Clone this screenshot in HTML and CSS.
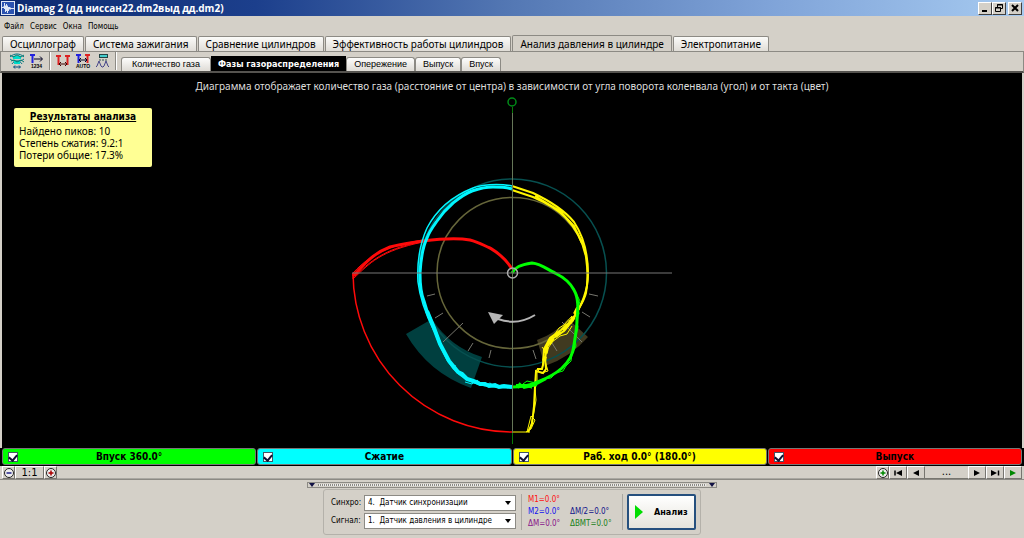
FILE: index.html
```html
<!DOCTYPE html>
<html lang="ru">
<head>
<meta charset="utf-8">
<title>Diamag 2</title>
<link rel="stylesheet" href="styles.css">
</head>
<body>
<div class="window">
  <header class="titlebar">
    <svg class="app-icon" viewBox="0 0 14 14" aria-hidden="true"><rect width="14" height="14" fill="#dfe6f4"/><rect x="1" y="1" width="12" height="12" fill="#2a52b0"/><path d="M1 6h1l1-1V2h1v2l1 1V3h1v2l1-1v2h2l1 1h3v1h-3l-1 1-1-1v2H7v2H6v-2H5v1H4V8H3V7H1z" fill="#dfe6f4"/></svg>
    <h1 class="title">Diamag 2 (дд ниссан22.dm2выд дд.dm2)</h1>
    <div class="window-buttons">
      <button class="win-btn" aria-label="Свернуть"><svg viewBox="0 0 12 10"><path d="M3 8h5" stroke="#000" stroke-width="2"/></svg></button>
      <button class="win-btn" aria-label="Восстановить"><svg viewBox="0 0 12 10"><path d="M4.500 4V1.500h5v4H8M4 2h6M2.500 4.500h5v4h-5zM2 5h6" fill="none" stroke="#000"/></svg></button>
      <button class="win-btn win-close" aria-label="Закрыть"><svg viewBox="0 0 12 10"><path d="M3 2l6 6M9 2L3 8" stroke="#000" stroke-width="2"/></svg></button>
    </div>
  </header>

  <nav class="menubar">
    <button>Файл</button><button>Сервис</button><button>Окна</button><button>Помощь</button>
  </nav>

  <div class="main-tabs" role="tablist">
    <button role="tab">Осциллограф</button>
    <button role="tab">Система зажигания</button>
    <button role="tab">Сравнение цилиндров</button>
    <button role="tab">Эффективность работы цилиндров</button>
    <button role="tab" class="active" aria-selected="true">Анализ давления в цилиндре</button>
    <button role="tab">Электропитание</button>
  </div>

  <div class="toolbar">
    <div class="tools">
      <button class="tool" aria-label="Наложение"><svg viewBox="0 0 16 16"><path d="M1 4c4-4 10-4 14 0M1 6c4 3 10 3 14 0M3 11c2-4 8-4 10 0" fill="none" stroke="#078" stroke-width="1"/><path d="M4 3h8v3H4zM5 8h6v3H5z" fill="#0dc"/><path d="M1 2l3 2 4-2 4 2 3-2M2 8l3-1 3 2 4-2 3 2" fill="none" stroke="#087a70"/><path d="M5 14h6M6 12.500L4.500 14 6 15.500M10 12.500L11.500 14 10 15.500" fill="none" stroke="#047"/></svg></button>
      <button class="tool" aria-label="Номера цилиндров"><svg viewBox="0 0 16 16"><path d="M1 1h5v2H4.500v7h-2V3H1z" fill="#22d"/><path d="M5 6h8M11 3.500L13.500 6 11 8.500" fill="none" stroke="#002"/><text x="2" y="15" class="icon-label">1234</text></svg></button>
      <span class="separator"></span>
      <button class="tool" aria-label="Метки"><svg viewBox="0 0 16 16"><path d="M1 2h5v2H4.500v8h-2V4H1zM10 2h5v2h-1.500v8h-2V4H10z" fill="#d22"/><path d="M4 11h8M6 9l-2 2 2 2M10 9l2 2-2 2" fill="none" stroke="#400"/></svg></button>
      <button class="tool" aria-label="Авто метки"><svg viewBox="0 0 16 16"><path d="M1 1h5v2H4.500v7h-2V3H1z" fill="#22d"/><path d="M10 1h5v2h-1.500v7h-2V3H10z" fill="#d22"/><path d="M4 7h8M6 5L4 7l2 2M10 5l2 2-2 2" fill="none" stroke="#002"/><text x="1" y="15" class="icon-label">AUTO</text></svg></button>
      <button class="tool" aria-label="Пики"><svg viewBox="0 0 16 16"><rect x="4.500" y="1.500" width="8" height="3" fill="#4cc" stroke="#244"/><path d="M5 6v2M8 6v2M11 6v2" stroke="#355"/><path d="M1 14l1-1 2-5 2 5 1 1h1l1-1 2-5 2 5 1 1" fill="none" stroke="#448"/></svg></button>
      <span class="separator"></span>
    </div>
    <div class="sub-tabs" role="tablist">
      <button role="tab" class="wide">Количество газа</button>
      <button role="tab" class="active" aria-selected="true">Фазы газораспределения</button>
      <button role="tab">Опережение</button>
      <button role="tab">Выпуск</button>
      <button role="tab">Впуск</button>
    </div>
  </div>

  <main class="plot">
    <svg class="diagram" viewBox="2 73 1020 375" role="img" aria-label="Фазы газораспределения">
      <g fill="none">
        <path d="M406 334A122 122 0 0 0 471 388L482 357A92 92 0 0 1 432 319Z" fill="#003f3f"/>
        <path d="M537 340A72 72 0 0 0 568 319L588 337A99 99 0 0 1 545 366Z" fill="#403a20"/>
        <circle cx="512.500" cy="273" r="94" stroke="#075050" stroke-width="1.500"/>
        <circle cx="512.500" cy="273" r="75.500" stroke="#66663a" stroke-width="1.500"/>
        <path d="M427 296l8-2M435 318l8-5M443 342l20-19M468 351l5-8M489 358l2-8M589 294l9 2M582 312l8 5M562 322l20 20M552 343l5 8M533 350l3 9" stroke="#77776f"/>
        <g stroke="#ff0a0a">
          <path d="M512 269C504 256 495 251 490 248C483 245 478 242 470 240C455 237 438 239 423 241C410 243 400 244 390 247C374 253 366 262 353 276" stroke-width="3"/>
          <path d="M423 240C398 244 374 250 353 273V279C370 263 380 251 423 242M355 276C374 257 390 248 420 242"/>
          <path d="M353 273A159.500 159.500 0 0 0 512 432" stroke-width="1.500"/>
        </g>
        <g stroke="#00f6ff">
          <path d="M512 189C506 187 500 187 493 187C483 187 478 189 472 191C464 194 458 199 453 203C446 209 441 215 437 221C432 228 429 232 427 238C423 246 421 256 420 273C420 286 421 294 424 301L427 311L434 328L440 344L448 360C456 373 465 379 474 382C486 386 495 387 512 387" stroke-width="3"/>
          <path d="M512 186C497 183 480 185 473 188C450 197 436 211 427 228C418 248 417 265 418 282C420 299 425 313 434 331" stroke-width="1.500"/>
          <path d="M427 311L434 328L440 344L449 361l5 6 4 5 4 2 5 5 7 2 6 3 5 0 4 2 6-1 4 2 5-1 8 1" stroke-width="4"/>
          <path d="M447 360l5 5 4 1M465 382l7 2 5-4 7 6 6-3 7 5 5-3 6 3"/>
        </g>
        <g stroke="#fff600">
          <path d="M512 190L533 197C549 204 558 210 565 217C575 227 583 242 586 257C588 271 588 282 586 293C584 301 580 306 577 312L573 320L564 331L552 339L547 347L545 358L546 369L543 373L536 371L535 387L534 406L532 424L528 432" stroke-width="2"/>
          <path d="M512 186L533 193C552 202 565 211 574 222C586 240 588 258 588 274C588 294 579 310 571 321L561 330L550 338L544 349L543 365L542 369L537 369M535 196L560 211L574 226L582 243" stroke-width="2"/>
          <path d="M572 316l-8 9-5 3-7 10-4 3-1 9 5-8 8-6 7-2 5-8M542 347l4 5-1 9 3 10-7 2-4-4v13l-2 7 1 11-2 12-4 17-3 3 4-16 4 4-4 9-5 3M543 363l-1 6M512 432h18"/>
          <path d="M578 308l-6 12-8 9-11 9-6 9-3 14" stroke-width="4" stroke-dasharray="7 3"/>
        </g>
        <g stroke="#0f0">
          <path d="M512 273C515 267 520 265 532 263C542 264 548 270 555 273C563 277 570 282 574 290C579 299 578 309 577 320C577 329 575 337 574 345C573 355 569 361 562 368C552 377 542 380 535 383C528 386 520 387 512 387" stroke-width="3"/>
          <path d="M576 293l4 8-2 7 1 6-3 4 2 9-3 12 1 7-4 8-1 7-5 5-3 5-7 2-5 5-8 1-7 4-9-2-4 3 9 4-8-2-6 2"/>
          <path d="M516 385h19l11-6M519 383l5 5 13-3" stroke-width="2"/>
        </g>
        <path d="M352 273H672" stroke="#777"/>
        <path d="M512.500 107V444" stroke="#667758"/>
        <path d="M512.500 107V113M512.500 433V444" stroke="#087a08"/>
        <circle cx="512" cy="102" r="4" stroke="#008b18" stroke-width="1.500"/>
        <circle cx="512.500" cy="273" r="5" stroke="#aaa" stroke-width="1.500"/>
        <path d="M535 315C522 323 509 323 498 319" stroke="#b5b5b5" stroke-width="2"/>
        <path d="M488 312L503 315L494 324Z" fill="#b5b5b5"/>
      </g>
    </svg>
    <p class="caption">Диаграмма отображает количество газа (расстояние от центра) в зависимости от угла поворота коленвала (угол) и от такта (цвет)</p>
    <section class="results">
      <h2>Результаты анализа</h2>
      <p>Найдено пиков: 10</p>
      <p>Степень сжатия: 9.2:1</p>
      <p>Потери общие: 17.3%</p>
    </section>
  </main>

  <div class="legend">
    <label class="stroke intake"><input type="checkbox" checked><span>Впуск 360.0°</span></label>
    <label class="stroke compression"><input type="checkbox" checked><span>Сжатие</span></label>
    <label class="stroke power"><input type="checkbox" checked><span>Раб. ход 0.0° (180.0°)</span></label>
    <label class="stroke exhaust"><input type="checkbox" checked><span>Выпуск</span></label>
  </div>

  <div class="navigator">
    <button class="nav round" aria-label="Уменьшить"><svg viewBox="0 0 12 12"><circle cx="6" cy="6" r="4.500" fill="#eee" stroke="#222"/><path d="M3.500 6h5" stroke="#228" stroke-width="1.500"/></svg></button>
    <button class="nav scale">1:1</button>
    <button class="nav round" aria-label="Увеличить"><svg viewBox="0 0 12 12"><circle cx="6" cy="6" r="4.500" fill="#eee" stroke="#222"/><path d="M3.500 6h5M6 3.500v5" stroke="#a00" stroke-width="1.500"/></svg></button>
    <span class="track"></span>
    <button class="nav round" aria-label="Добавить"><svg viewBox="0 0 12 12"><circle cx="6" cy="6" r="4.500" fill="#eee" stroke="#222"/><path d="M3.500 6h5M6 3.500v5" stroke="#080" stroke-width="1.500"/></svg></button>
    <button class="nav" aria-label="В начало"><svg viewBox="0 0 12 12"><path d="M3 3.500v5" stroke="#000" stroke-width="1.500"/><path d="M10 3v6L4 6z"/></svg></button>
    <button class="nav" aria-label="Назад"><svg viewBox="0 0 12 12"><path d="M9 3v6L3 6z"/></svg></button>
    <button class="nav more">...</button>
    <button class="nav" aria-label="Вперёд"><svg viewBox="0 0 12 12"><path d="M3 3v6l6-3z"/></svg></button>
    <button class="nav" aria-label="В конец"><svg viewBox="0 0 12 12"><path d="M2 3v6l6-3z"/><path d="M9.500 3.500v5" stroke="#000" stroke-width="1.500"/></svg></button>
    <button class="nav" aria-label="Пуск"><svg viewBox="0 0 12 12"><path d="M3 3v6l6-3z" fill="#080"/></svg></button>
  </div>

  <footer class="bottom">
    <div class="splitter">
      <svg viewBox="0 0 8 4"><path d="M1 0h6L4 4z" fill="#114"/></svg>
      <span class="grip"></span>
      <svg viewBox="0 0 8 4"><path d="M1 0h6L4 4z" fill="#114"/></svg>
    </div>
    <div class="controls">
      <div class="sources">
        <label for="sync">Синхро:</label>
        <div class="combo"><select id="sync"><option>4.&nbsp; Датчик синхронизации</option></select></div>
        <label for="signal">Сигнал:</label>
        <div class="combo"><select id="signal"><option>1.&nbsp; Датчик давления в цилиндре</option></select></div>
      </div>
      <div class="markers">
        <span class="m1">M1=0.0°</span>
        <span class="m2">M2=0.0°</span><span class="half">ΔM/2=0.0°</span>
        <span class="delta">ΔM=0.0°</span><span class="bmt">ΔBMT=0.0°</span>
      </div>
      <button class="analyze"><svg viewBox="0 0 8 14"><path d="M0 0l8 7-8 7z" fill="#0d0"/></svg><span>Анализ</span></button>
    </div>
  </footer>
</div>
</body>
</html>
```
FILE: styles.css
```css
* { box-sizing: border-box; }

body {
  margin: 0;
  background: #d4d0c8;
  color: #000;
  font: 10px/12px "Liberation Sans", Arial, sans-serif;
}

button {
  margin: 0;
  padding: 0;
  border: 0;
  background: none;
  color: inherit;
  font: inherit;
  white-space: nowrap;
}

svg { display: block; }
h1, h2, p { margin: 0; }

.window {
  display: flex;
  flex-direction: column;
  min-height: 100vh;
}

/* Title bar */
.titlebar {
  display: flex;
  align-items: center;
  gap: 2px;
  height: 16px;
  padding: 0 1px;
  background: linear-gradient(90deg, #0c2a70, #1c3f8c 25%, #5478b4 50%, #7fa3d8 75%, #a6caf0);
}
.app-icon { width: 14px; height: 14px; }
.title {
  flex: 1;
  color: #fff;
  font: bold 10px/16px "Open Sans", "Noto Sans", sans-serif;
}
.window-buttons { display: flex; padding-right: 1px; }
.win-btn {
  width: 14px;
  height: 13px;
  background: #d4d0c8;
  border: 1px solid;
  border-color: #fff #404040 #404040 #fff;
}
.win-btn svg { width: 12px; height: 10px; }
.win-close { margin-left: 2px; }

/* Menu */
.menubar {
  display: flex;
  gap: 6px;
  padding: 5px 4px 0;
  font: 8px/12px "DejaVu Sans Condensed", "DejaVu Sans", sans-serif;
}

/* Main tabs */
.main-tabs {
  display: flex;
  align-items: flex-end;
  gap: 1px;
  padding: 2px 2px 0;
  font: 10px/14px "Noto Sans", sans-serif;
}
.main-tabs button {
  height: 15px;
  padding: 0 7px;
  border: 1px solid #8c8a84;
  border-bottom: 0;
  border-radius: 2px 2px 0 0;
  background: linear-gradient(#fbfbf9, #e0ddd7);
}
.main-tabs .active {
  height: 17px;
  margin-bottom: -1px;
  background: #d4d0c8;
}

/* Toolbar */
.toolbar {
  display: flex;
  align-items: flex-end;
  gap: 4px;
  height: 22px;
  padding: 0 3px;
  border: 1px solid #8c8a84;
  border-bottom: 2px solid #55534f;
}
.tools { display: flex; align-items: center; gap: 4px; padding: 0 0 1px 5px; }
.tool svg { width: 16px; height: 16px; }
.icon-label { font: bold 5px "Liberation Sans", sans-serif; }
.separator { width: 2px; height: 18px; border-left: 1px solid #8c8a84; border-right: 1px solid #fff; }
.sub-tabs { display: flex; align-items: flex-end; font: 9px/13px "Liberation Sans", sans-serif; }
.sub-tabs button {
  height: 14px;
  padding: 0 7px;
  border: 1px solid #8c8a84;
  border-bottom: 0;
  border-radius: 3px 3px 0 0;
  background: linear-gradient(#fdfdfc, #dedbd5);
}
.sub-tabs .wide { padding: 0 10px; }
.sub-tabs .active {
  height: 15px;
  padding: 0 6px;
  border-color: #000;
  border-radius: 0;
  background: #000;
  color: #fff;
  font: bold 9px/13px "DejaVu Sans Condensed", "DejaVu Sans", sans-serif;
}

/* Diagram */
.plot {
  position: relative;
  flex: 1 0 375px;
  margin: 0 2px;
  background: #000;
}
.diagram { position: absolute; inset: 0; width: 100%; height: 100%; }
.caption {
  position: absolute;
  inset: 7px 0 auto;
  color: #ddd;
  font: 10px/12px "Noto Sans", sans-serif;
  text-align: center;
}
.results {
  position: absolute;
  left: 12px;
  top: 35px;
  width: 138px;
  padding: 2px 5px 6px;
  border-radius: 2px;
  background: #ffff94;
  font: 10px/12px "Noto Sans", sans-serif;
}
.results h2 {
  margin-bottom: 2px;
  font: bold 10px/13px "DejaVu Sans Condensed", "DejaVu Sans", sans-serif;
  text-align: center;
  text-decoration: underline;
}

/* Stroke legend */
.legend {
  display: grid;
  grid-template-columns: repeat(4, 1fr);
  gap: 1px;
  padding: 0 2px 1px;
  background: #000;
}
.stroke {
  display: flex;
  align-items: center;
  height: 17px;
  padding: 0 15px 0 5px;
  border: 1px solid #777;
  border-radius: 3px;
  font: bold 10px/14px "DejaVu Sans Condensed", "DejaVu Sans", sans-serif;
}
.stroke span { flex: 1; text-align: center; }
.intake { background: #0f0; }
.compression { background: #0ff; }
.power { background: #ff0; }
.exhaust { background: #f00; }
.stroke input {
  appearance: none;
  display: grid;
  place-items: center;
  width: 10px;
  height: 10px;
  margin: 0;
  background: #fff;
  border: 1px solid #456;
}
.stroke input:checked::after {
  content: "";
  width: 4px;
  height: 6px;
  border: solid #113;
  border-width: 0 2px 2px 0;
  transform: rotate(40deg);
}

/* Navigator */
.navigator {
  display: flex;
  height: 14px;
  padding: 0 2px;
  border-bottom: 1px solid #8c8a84;
}
.nav {
  display: grid;
  place-items: center;
  width: 18px;
  border: 1px solid;
  border-color: #fff #77756f #77756f #fff;
}
.nav svg { width: 12px; height: 12px; }
.round { width: 13px; }
.scale { width: 29px; font: 10px/12px "DejaVu Sans", sans-serif; }
.more { width: 43px; border-color: #77756f; border-width: 0 0 1px; font: 10px/10px "DejaVu Sans", sans-serif; }
.track { flex: 1; border-bottom: 1px solid #aaa8a2; }

/* Bottom panel */
.bottom {
  display: flex;
  flex-direction: column;
  align-items: center;
  gap: 1px;
  padding: 2px 0 3px;
}
.splitter {
  display: flex;
  align-items: center;
  gap: 2px;
  width: 410px;
  height: 6px;
  border: 1px solid #8c8a84;
}
.splitter svg { width: 8px; height: 4px; }
.grip { flex: 1; height: 2px; background: repeating-linear-gradient(90deg, #8c8a84 0 1px, #eee 1px 2px); }
.controls {
  display: flex;
  align-items: stretch;
  width: 378px;
  padding: 4px 4px 4px 7px;
  border: 1px solid #b4b1aa;
  border-radius: 3px;
}
.sources {
  display: grid;
  grid-template-columns: 31px 152px;
  align-content: center;
  align-items: center;
  gap: 2px;
  font: 8px/16px "DejaVu Sans Condensed", "DejaVu Sans", sans-serif;
}
.combo { position: relative; }
.combo::after {
  content: "";
  position: absolute;
  right: 5px;
  top: 6px;
  border: solid transparent;
  border-width: 4px 3px 0;
  border-top-color: #000;
  pointer-events: none;
}
.combo select {
  display: block;
  appearance: none;
  width: 100%;
  height: 16px;
  padding: 0 14px 0 3px;
  border: 1px solid #8c8a84;
  border-radius: 0;
  background: #fff;
  color: #000;
  font: 8px/14px "DejaVu Sans Condensed", "DejaVu Sans", sans-serif;
}
.markers {
  display: grid;
  grid-template-columns: 42px 52px;
  align-content: center;
  margin: 0 4px 0 5px;
  padding-left: 6px;
  border: solid #aaa8a2;
  border-width: 0 1px;
  font: 8px/12px "DejaVu Sans Condensed", "DejaVu Sans", sans-serif;
}
.m1 { grid-column: 1 / -1; color: #f11; }
.m2 { color: #11e; }
.half { color: #118; }
.delta { color: #818; }
.bmt { color: #188018; }
.analyze {
  display: flex;
  align-items: center;
  gap: 11px;
  flex: 1;
  height: 36px;
  padding-left: 6px;
  border: 2px solid #26507e;
  border-radius: 2px;
  background: linear-gradient(#fff, #e6e4dc);
  font: bold 9px/12px "DejaVu Sans Condensed", "DejaVu Sans", sans-serif;
}
.analyze svg { width: 8px; height: 14px; }
```
